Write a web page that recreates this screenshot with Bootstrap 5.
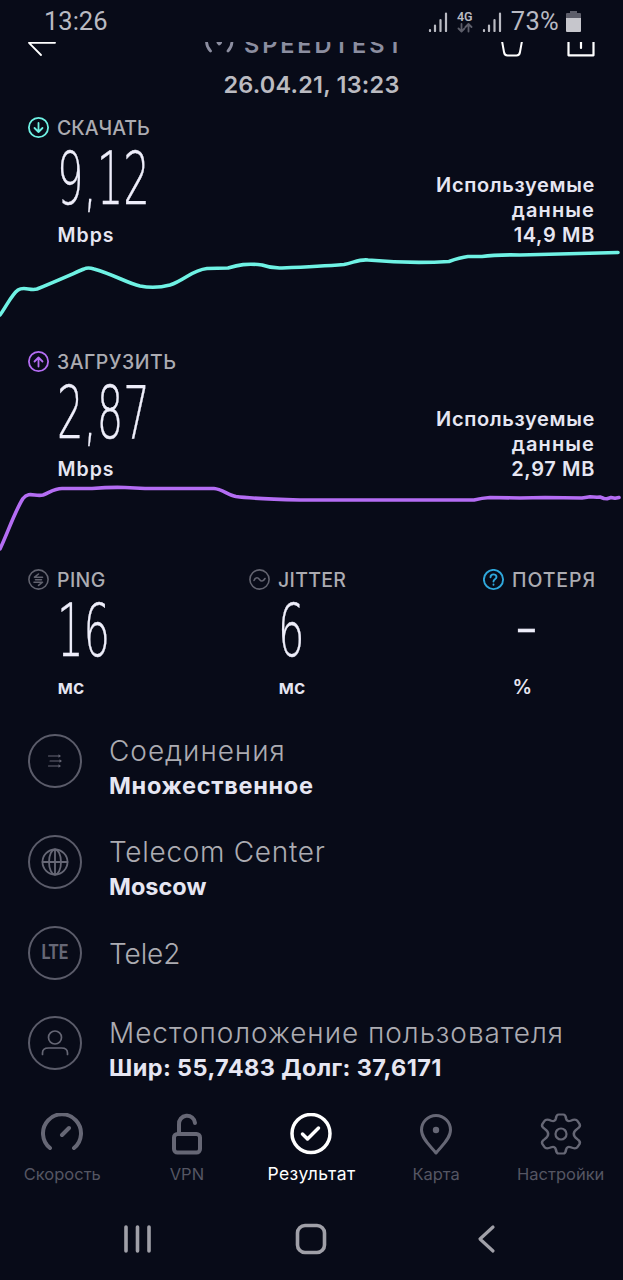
<!DOCTYPE html>
<html lang="ru">
<head>
<meta charset="utf-8">
<meta name="viewport" content="width=device-width, initial-scale=1">
<title>Speedtest</title>
<link href="https://cdn.jsdelivr.net/npm/bootstrap@5.3.0/dist/css/bootstrap.min.css" rel="stylesheet">
<style>
body{background:#080b18;color:#e6e6f2;font-family:Inter,"Noto Sans",sans-serif;width:623px;height:1280px;overflow:hidden;white-space:nowrap}
svg{display:block;flex:none;fill:none;stroke:currentColor;stroke-linecap:round;stroke-linejoin:round}
.statusbar{height:42px;padding:1px 42px 0 44px;font-family:Roboto,sans-serif;font-size:25.5px;color:#b9bac2}
.net{font-size:12.5px;line-height:12px;font-weight:600;width:16px}
.topbar{height:18px;overflow:hidden;padding:0 28px;color:#fff}
.brand{margin-left:149px;color:#8c8ea0}
.brand span{font-size:23.5px;line-height:18px;margin:-6px 0 0 10px;font-weight:600;letter-spacing:2.9px}
.stamp{height:50px;line-height:50px;font-size:23.5px;font-weight:600;color:#bbbbc1;letter-spacing:.2px}
.metric{height:138px;padding:7px 28px 0}
.metric+svg{margin-bottom:24px}
.down{color:#6ff2e4}
.up{color:#b46df3}
.cap{font-size:19.5px;line-height:22px;font-weight:500;color:#acacb2;gap:7px}
.num{font-family:"DejaVu Sans Light","DejaVu Sans",sans-serif;font-weight:200;font-size:72.5px;line-height:80px;height:80px;transform:scaleX(.575);transform-origin:0 50%;width:0;color:#eeeefa;-webkit-text-stroke:.4px #eeeefa}
.ind{margin-left:29.5px}
.num.ind{margin-left:28.5px}
.unit{font-size:19.5px;line-height:24px;font-weight:600;margin-top:4px}
.used{font-size:20px;line-height:25px;font-weight:600;text-align:right;margin:55.5px 0 0 0;letter-spacing:.65px}
.stats{padding:0 28px;height:165px}
.stats>div{flex:none}
.item{padding-left:28px}
.ring{width:54px;height:54px;border:2px solid #5b5c6a;border-radius:50%;color:#666775;flex:none}
.lte{font-family:Roboto,sans-serif;font-size:19.5px;font-weight:700;transform:scaleX(.84)}
.txt{margin:-1px 0 0 27px}
.ttl{font-size:28px;line-height:37px;font-weight:350;color:#acacb2;letter-spacing:.95px}
.sub{font-size:23.5px;line-height:34px;font-weight:700;margin-top:-1px}
.tabs{height:92px;padding-top:6px}
.tab{width:20%;color:#555663;font-size:16.5px;line-height:24px}
.tab svg{margin-bottom:7px;color:#666775}
.tab.on,.tab.on svg{color:#fff}
.tab.on{font-size:17.5px;letter-spacing:.4px}
.sysnav{height:80px;color:#a0a0a8}
</style>
</head>
<body>
<header class="statusbar d-flex align-items-center">
  <span>13:26</span>
  <svg class="ms-auto" width="20" height="20" stroke-width="2.2"><path d="M2 18v1M7 13.500v5.500M12.500 8v11M18 1.500v17.500"/></svg>
  <div class="net text-center" style="margin:0 9px 0 9px">4G<svg width="16" height="10" color="#5d5e6a" stroke-width="1.800"><path d="M4.500 1v7M1.500 5.500l3 3 3-3M11.500 8.500v-7M8.500 4l3-3 3 3"/></svg></div>
  <svg width="20" height="20" stroke-width="2.200"><path d="M2 18v1M7 13.500v5.500M12.500 8v11M18 1.500v17.500"/></svg>
  <span style="margin:0 7px 0 9px;letter-spacing:.3px">73%</span>
  <svg width="15" height="21"><path d="M4 0h7v2h3q1 0 1 1v4H0V3q0-1 1-1h3z" fill="#5d5e6a" stroke="none"/><path d="M0 7h15v13q0 1-1 1H1q-1 0-1-1z" fill="#c6c6cc" stroke="none"/></svg>
</header>
<div class="topbar d-flex">
  <svg width="28" height="18" stroke-width="1.800"><path d="M27 .8H1L13 13"/></svg>
  <div class="brand d-flex"><svg width="29" height="18" stroke-width="2.800"><path d="M1.500-1Q1.500 5 5.500 9M27-1Q27 5 23 9M13 .5l1.300 1.500L15.600.5"/></svg><span>SPEEDTEST</span></div>
  <svg class="ms-auto" width="24" height="18" stroke-width="2"><path d="M1-1L3 10q.5 3.500 3.500 3.500h9Q18.500 13.500 19 10L21-1"/></svg>
  <svg style="margin-left:42px" width="28" height="18" stroke-width="2.200"><path d="M1.500-1v14.300h25V-1M14-1v7"/></svg>
</div>
<div class="stamp text-center">26.04.21, 13:23</div>

<section class="metric d-flex justify-content-between">
  <div>
    <div class="cap d-flex align-items-center"><svg class="down" width="22" height="22" stroke-width="1.800"><circle cx="10.500" cy="10.500" r="9.600"/><path d="M10.500 6v9M6.500 11l4 4 4-4"/></svg><span>СКАЧАТЬ</span></div>
    <div class="num ind">9,12</div>
    <div class="unit ind" style="letter-spacing:1px">Mbps</div>
  </div>
  <div class="used">Используемые<br><span style="letter-spacing:1.1px">данные</span><br>14,9 MB</div>
</section>
<svg class="down" width="623" height="72" stroke-width="3.600"><path d="M0 67C6 59 12 46 18 42S30 43 37 41C54 34 70 27 84 21Q88 19 94 21C115 27 127 35 140 38Q155 41 170 37C185 32 192 22 207 20.500Q217 20 228 20C238 17 247 15 262 17Q272 20.500 282 20C305 19 325 18 344 16.500C354 14.500 360 11 368 12C395 14.500 425 15 449 13.500Q460 9.500 468 8.500H482Q495 6.500 520 7L618 4.500"/></svg>

<section class="metric d-flex justify-content-between">
  <div>
    <div class="cap d-flex align-items-center"><svg class="up" width="22" height="22" stroke-width="1.800"><circle cx="10.500" cy="10.500" r="9.600"/><path d="M10.500 15.500v-9M6.500 10.500l4-4 4 4"/></svg><span style="letter-spacing:.5px">ЗАГРУЗИТЬ</span></div>
    <div class="num ind">2,87</div>
    <div class="unit ind" style="letter-spacing:1px">Mbps</div>
  </div>
  <div class="used">Используемые<br><span style="letter-spacing:1.1px">данные</span><br>2,97 MB</div>
</section>
<svg class="up" width="623" height="72" style="margin-bottom:14.500px" stroke-width="3.600"><path d="M0 67C8 50 15 29 23 16.500C29 9 35 15 43 13C49 11 54 6.500 62 6.500H92Q110 5 125 5.500L145 6.500H214C222 7 228 13 236 14.500Q250 16.500 300 18H474Q482 16 490 15.500L520 16 545 15.500 582 16 587 15.200 590 14.700 597 15.200 600 15 604 16.500 607 16.700 611 15.500 615 16.300 619 15.500"/></svg>

<section class="stats d-flex">
  <div style="width:221px">
    <div class="cap d-flex align-items-center"><svg width="22" height="22" color="#62636f" stroke-width="1.600"><circle cx="10.500" cy="10.500" r="9.600"/><path d="M14.500 8.200H6.500L10.500 5M7.500 10.700h6M6 13.200h8.500L10.500 16.300"/></svg><span style="letter-spacing:.4px">PING</span></div>
    <div class="num ind">16</div>
    <div class="unit ind">мс</div>
  </div>
  <div style="width:234px">
    <div class="cap d-flex align-items-center"><svg width="22" height="22" color="#62636f" stroke-width="1.600"><circle cx="10.500" cy="10.500" r="9.600"/><path d="M5 11.500C7 7.500 9 8.500 10.500 10.500s3.500 2.500 5.500-1"/></svg><span style="letter-spacing:.3px">JITTER</span></div>
    <div class="num ind">6</div>
    <div class="unit ind">мс</div>
  </div>
  <div>
    <div class="cap d-flex align-items-center"><svg width="22" height="22" color="#2fa8dc" stroke-width="1.900"><circle cx="10.500" cy="10.500" r="9.600"/><path d="M7.500 8.200C7.700 4.300 13.500 4.500 13.500 8c0 2.300-3 2.300-3 4.500M10.500 15.500v.2"/></svg><span style="letter-spacing:.9px">ПОТЕРЯ</span></div>
    <div class="num" style="margin:-5px 0 0 33px">–</div>
    <div class="unit ind" style="margin-top:9px">%</div>
  </div>
</section>

<section>
  <div class="item d-flex" style="height:101px">
    <div class="ring d-flex align-items-center justify-content-center"><svg width="14" height="14" stroke-width="1.100"><path d="M.5 2h10M2 7H12.500M.5 12h10"/><path d="M10.500.3v3.400L13 2zM11.500 5.300v3.400L14 7zM10.500 10.300v3.400L13 12z" fill="currentColor" stroke="none"/></svg></div>
    <div class="txt"><div class="ttl">Соединения</div><div class="sub" style="letter-spacing:.7px">Множественное</div></div>
  </div>
  <div class="item d-flex" style="height:91px">
    <div class="ring d-flex align-items-center justify-content-center"><svg width="28" height="28" stroke-width="1.800"><circle cx="14" cy="14" r="12.500"/><ellipse cx="14" cy="14" rx="6" ry="12.500"/><path d="M14 1.500v25M1.500 14h25"/></svg></div>
    <div class="txt"><div class="ttl" style="letter-spacing:.7px">Telecom Center</div><div class="sub">Moscow</div></div>
  </div>
  <div class="item d-flex" style="height:90px">
    <div class="ring d-flex align-items-center justify-content-center"><span class="lte">LTE</span></div>
    <div class="txt" style="padding-top:11px"><div class="ttl" style="letter-spacing:-.1px">Tele2</div></div>
  </div>
  <div class="item d-flex" style="height:84px">
    <div class="ring d-flex align-items-center justify-content-center"><svg width="28" height="28" stroke-width="1.700"><circle cx="14" cy="8.500" r="6.500"/><path d="M1.500 25.500v-1.500q0-5 6-5h13q6 0 6 5v1.500"/></svg></div>
    <div class="txt"><div class="ttl">Местоположение пользователя</div><div class="sub" style="letter-spacing:.4px">Шир: 55,7483 Долг: 37,6171</div></div>
  </div>
</section>

<nav class="tabs d-flex" style="margin-top:7px">
  <div class="tab d-flex flex-column align-items-center"><svg width="44" height="42" stroke-width="4"><path d="M10 35A19 19 0 1 1 34 35M22 22l7-7"/></svg>Скорость</div>
  <div class="tab d-flex flex-column align-items-center"><svg width="44" height="42" stroke-width="4"><rect x="9" y="21" width="26" height="18.500" rx="3.500"/><path d="M14 21V11.500a8 8 0 0 1 16-1.500"/></svg>VPN</div>
  <div class="tab on d-flex flex-column align-items-center"><svg width="44" height="42" stroke-width="3.500"><circle cx="22" cy="20.500" r="19"/><path d="M13.500 21l5 5 11-11"/></svg>Результат</div>
  <div class="tab d-flex flex-column align-items-center"><svg width="44" height="42" stroke-width="3"><path d="M22 40C17 33.500 7.500 26 7.500 17a14.500 14.500 0 0 1 29 0C36.500 26 27 33.500 22 40z"/><circle cx="22" cy="17" r="3.200" fill="currentColor" stroke="none"/></svg>Карта</div>
  <div class="tab d-flex flex-column align-items-center"><svg width="44" height="42" stroke-width="2.200"><circle cx="22" cy="21" r="5.500"/><path transform="translate(-3.100 0) scale(1.140 1)" d="M17.500 5.500Q18 1.500 20 1.500h4q2 0 2.500 4 .7 3.500 4 2.200 4.500-2.200 6 .3l1.800 3q1.200 2.500-2 4.800-3.300 2.700-3 5.200-.3 2.500 3 5.200 3.200 2.300 2 4.800l-1.800 3q-1.500 2.500-6 .3-3.300-1.300-4 2.200-.5 4-2.500 4h-4q-2 0-2.500-4-.7-3.500-4-2.200-4.500 2.200-6-.3l-1.800-3q-1.200-2.500 2-4.800 3.300-2.700 3-5.200.3-2.500-3-5.200-3.200-2.300-2-4.800l1.800-3q1.500-2.500 6-.3 3.300 1.300 4-2.200z"/></svg>Настройки</div>
</nav>
<footer class="sysnav d-flex align-items-center">
  <svg style="margin-left:123px" width="29" height="30" stroke-width="3.600"><path d="M3 3v24M14.500 3v24M26 3v24"/></svg>
  <svg style="margin-left:143px" width="32" height="32" stroke-width="3.600"><rect x="2.500" y="2.500" width="27" height="27" rx="7.500"/></svg>
  <svg style="margin-left:149px" width="20" height="30" stroke-width="3.200"><path d="M17 3L4 15l13 12"/></svg>
</footer>
</body>
</html>
